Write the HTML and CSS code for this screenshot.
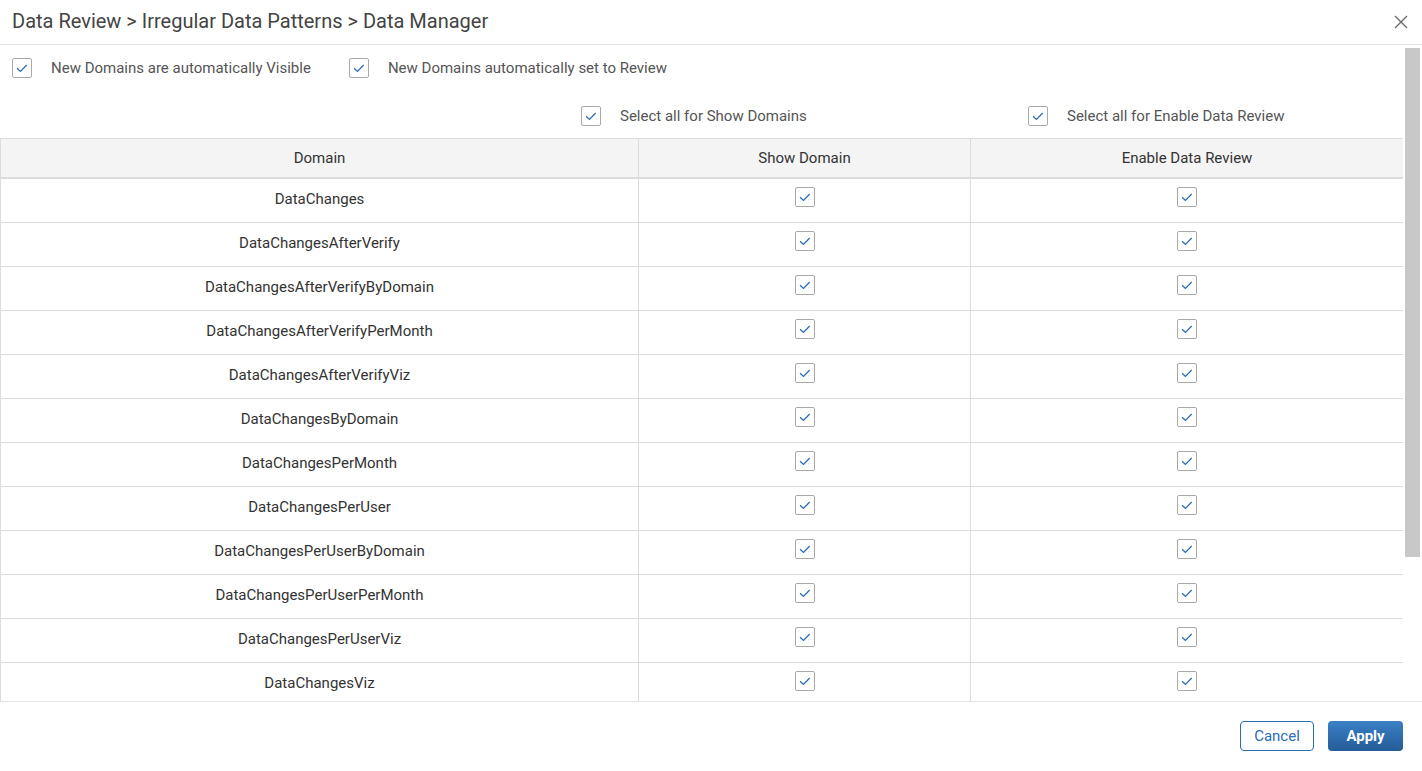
FILE: index.html
```html
<!DOCTYPE html>
<html lang="en">
<head>
    <meta charset="UTF-8">
    <meta name="viewport" content="width=device-width, initial-scale=1.0">
    <title>Data Manager</title>
    <link rel="stylesheet" href="styles.css">
</head>
<body>
    <div class="dialog">
        <div class="dialog-header">
            <h1>Data Review &gt; Irregular Data Patterns &gt; Data Manager</h1>
            <button class="close-btn" title="Close">
                <svg width="14" height="14" viewBox="0 0 14 14"><path d="M1 1L13 13M13 1L1 13" stroke="#666" stroke-width="1.3" fill="none"/></svg>
            </button>
        </div>

        <div class="dialog-body">
            <div class="scroll-content">
                <div class="options">
                    <label class="check-item option-auto"><span class="check on"></span>New Domains are automatically Visible</label>
                    <label class="check-item"><span class="check on"></span>New Domains automatically set to Review</label>
                </div>
                <div class="select-all">
                    <label class="check-item select-show"><span class="check on"></span>Select all for Show Domains</label>
                    <label class="check-item"><span class="check on"></span>Select all for Enable Data Review</label>
                </div>

                <table class="domain-table">
                    <colgroup>
                        <col class="col-domain">
                        <col class="col-show">
                        <col class="col-review">
                    </colgroup>
                    <thead>
                        <tr>
                            <th>Domain</th>
                            <th>Show Domain</th>
                            <th>Enable Data Review</th>
                        </tr>
                    </thead>
                    <tbody id="domainRows"></tbody>
                </table>
            </div>
            <!-- scrollbar for the domain list -->
            <div class="scroll-track"><div class="scroll-thumb"></div></div>
        </div>

        <div class="dialog-footer">
            <button class="btn btn-outline">Cancel</button>
            <button class="btn btn-primary">Apply</button>
        </div>
    </div>
    <script>
    const domains = [
        'DataChanges',
        'DataChangesAfterVerify',
        'DataChangesAfterVerifyByDomain',
        'DataChangesAfterVerifyPerMonth',
        'DataChangesAfterVerifyViz',
        'DataChangesByDomain',
        'DataChangesPerMonth',
        'DataChangesPerUser',
        'DataChangesPerUserByDomain',
        'DataChangesPerUserPerMonth',
        'DataChangesPerUserViz',
        'DataChangesViz',
        'DataEntryProgress',
        'DataEntryProgressByDomain',
        'DataVerifyStatus',
        'DataVerifyStatusPerMonth'
    ];

    const checkSvg = '<svg viewBox="0 0 20 20"><path d="M4.5 10.2L8.3 13.8L15.2 6.6" /></svg>';

    // put the tick inside every checkbox
    function fillChecks(root) {
        root.querySelectorAll('.check').forEach(function (c) {
            c.innerHTML = checkSvg;
        });
    }

    const body = document.getElementById('domainRows');
    domains.forEach(function (name) {
        const row = body.insertRow();
        const nameCell = row.insertCell(0);
        const label = document.createElement('span');
        label.className = 'cell-text';
        label.textContent = name;
        nameCell.appendChild(label);
        row.insertCell(1).innerHTML = '<span class="check on"></span>';
        row.insertCell(2).innerHTML = '<span class="check on"></span>';
    });
    fillChecks(document);

    // toggle any checkbox on click
    document.addEventListener('click', function (e) {
        const box = e.target.closest('.check-item, td');
        if (!box) return;
        const check = box.querySelector('.check');
        if (check) check.classList.toggle('on');
    });
    </script>
</body>
</html>
```

FILE: styles.css
```css
html, body {
    margin: 0;
    height: 100%;
}
body {
    font-family: Roboto, "Liberation Sans", Arial, sans-serif;
    font-size: 15px;
    color: #333;
    background-color: white;
}
.dialog {
    display: flex;
    flex-direction: column;
    height: 100vh;
}
.dialog-header {
    display: flex;
    align-items: center;
    justify-content: space-between;
    height: 44px;
    padding: 0 12px;
    border-bottom: 1px solid #e3e3e3;
    flex-shrink: 0;
}
.dialog-header h1 {
    margin: 0;
    font-size: 20px;
    font-weight: normal;
    color: #444;
    padding-bottom: 2px;
}
.close-btn {
    border: none;
    background: none;
    padding: 0;
    margin-right: 2px;
    cursor: pointer;
    display: flex;
}
.dialog-body {
    flex: 1;
    display: flex;
    min-height: 0;
}
.scroll-content {
    flex: 1;
    overflow: hidden;
}
.scroll-track {
    width: 19px;
    flex-shrink: 0;
    background: white;
}
.scroll-thumb {
    width: 15px;
    height: 509px;
    margin: 3px 0 0 2px;
    background-color: #c8c8c8;
}
.options {
    display: flex;
    padding: 13px 12px 0;
}
.select-all {
    display: flex;
    padding: 28px 0 12px 581px;
}
.check-item {
    display: flex;
    align-items: center;
    gap: 19px;
    color: #555;
    cursor: pointer;
}
.option-auto {
    margin-right: 38px;
}
.select-show {
    width: 447px;
}
.check {
    display: inline-block;
    box-sizing: border-box;
    width: 20px;
    height: 20px;
    border: 1px solid #a9a9a9;
    border-radius: 2px;
    background-color: white;
    vertical-align: middle;
}
.check svg {
    display: none;
    width: 18px;
    height: 18px;
    fill: none;
    stroke: #2b6cb3;
    stroke-width: 1.4;
}
.check.on svg {
    display: block;
}
.domain-table {
    width: 1403px;
    border-collapse: collapse;
    table-layout: fixed;
}
.col-domain {
    width: 638px;
}
.col-show {
    width: 332px;
}
.col-review {
    width: 433px;
}
.domain-table th,
.domain-table td {
    border: 1px solid #dcdcdc;
    padding: 0;
    text-align: center;
    font-weight: normal;
}
.domain-table th {
    height: 38px;
    background-color: #f4f4f4;
    border-bottom: 2px solid #dcdcdc;
    color: #333;
}
.domain-table td {
    height: 43px;
    color: #333;
}
.domain-table td .cell-text {
    position: relative;
    top: -2px;
}
.domain-table td .check {
    position: relative;
    top: -3px;
    margin-top: -2px;
}
.dialog-footer {
    display: flex;
    justify-content: flex-end;
    align-items: flex-start;
    gap: 14px;
    height: 70px;
    box-sizing: border-box;
    padding: 19px 19px 0 0;
    border-top: 1px solid #e3e3e3;
    flex-shrink: 0;
}
.btn {
    height: 30px;
    border-radius: 4px;
    font-family: inherit;
    font-size: 15px;
    cursor: pointer;
}
.btn-outline {
    width: 74px;
    background: white;
    border: 1px solid #2a6db0;
    color: #2a6db0;
}
.btn-primary {
    width: 75px;
    border: none;
    color: white;
    font-weight: bold;
    background: linear-gradient(to bottom, #3b80c6, #245c96);
}
```
